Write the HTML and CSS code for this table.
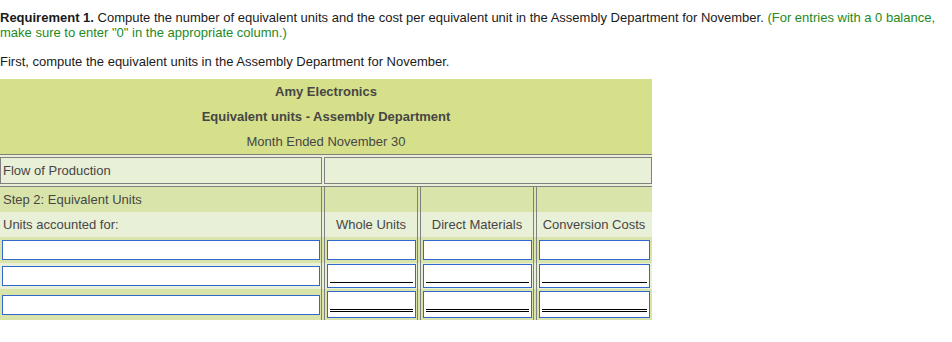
FILE: index.html
```html
<!DOCTYPE html>
<html>
<head>
<meta charset="utf-8">
<title>Equivalent units</title>
<link rel="stylesheet" href="styles.css">
</head>
<body>
<div class="intro">
  <p class="req"><b>Requirement 1.</b> Compute the number of equivalent units and the cost per equivalent unit in the Assembly Department for November. <span class="hint">(For entries with a 0 balance,</span><br><span class="hint">make sure to enter "0" in the appropriate column.)</span></p>
  <p class="first">First, compute the equivalent units in the Assembly Department for November.</p>
</div>

<div class="sheet">
  <div class="sheet-head">
    <div class="h-row bold">Amy Electronics</div>
    <div class="h-row bold">Equivalent units - Assembly Department</div>
    <div class="h-row">Month Ended November 30</div>
  </div>

  <div class="flow">
    <div class="flow-cell label">Flow of Production</div>
    <div class="flow-cell"></div>
  </div>

  <div class="lower">
    <div class="row dark">
      <div class="cell c1 label">Step 2: Equivalent Units</div>
      <div class="cell c2"></div>
      <div class="cell c3"></div>
      <div class="cell c4"></div>
    </div>
    <div class="row light">
      <div class="cell c1 label">Units accounted for:</div>
      <div class="cell c2 colhead">Whole Units</div>
      <div class="cell c3 colhead">Direct Materials</div>
      <div class="cell c4 colhead">Conversion Costs</div>
    </div>
    <div class="row dark r1">
      <div class="cell c1"><input class="text-in" type="text"></div>
      <div class="cell c2"><span class="box"><input class="num u0" type="text"></span></div>
      <div class="cell c3"><span class="box"><input class="num u0" type="text"></span></div>
      <div class="cell c4"><span class="box"><input class="num u0" type="text"></span></div>
    </div>
    <div class="row light r2">
      <div class="cell c1"><input class="text-in" type="text"></div>
      <div class="cell c2"><span class="box single"><input class="num u1" type="text"></span></div>
      <div class="cell c3"><span class="box single"><input class="num u1" type="text"></span></div>
      <div class="cell c4"><span class="box single"><input class="num u1" type="text"></span></div>
    </div>
    <div class="row dark r3">
      <div class="cell c1"><input class="text-in" type="text"></div>
      <div class="cell c2"><span class="box double"><input class="num u2" type="text"></span></div>
      <div class="cell c3"><span class="box double"><input class="num u2" type="text"></span></div>
      <div class="cell c4"><span class="box double"><input class="num u2" type="text"></span></div>
    </div>
  </div>
</div>
</body>
</html>
```

FILE: styles.css
```css
html, body {
  margin: 0;
  padding: 0;
  background: #ffffff;
}

body {
  font-family: "Liberation Sans", Arial, sans-serif;
  font-size: 13px;
  line-height: 15px;
  color: #1a1a1a;
}

.intro {
  padding-top: 10px;
}

.intro p {
  margin: 0;
}

.intro .first {
  margin: 14px 0 10px;
}

.hint {
  color: #238a23;
}

.sheet {
  width: 652px;
  background: #e8f0d8;
  color: #464646;
}

.sheet-head {
  background: #d6e08a;
  border-bottom: 1px solid #808080;
  text-align: center;
}

.h-row {
  height: 25px;
  line-height: 25px;
}

.bold {
  font-weight: bold;
}

.flow {
  display: grid;
  grid-template-columns: 322px 328px;
  column-gap: 2px;
  padding: 2px 0;
}

.flow-cell {
  border: 1px solid #808080;
  height: 25px;
  line-height: 25px;
  background: #e8f0d8;
}

.flow-cell.label {
  padding-left: 2px;
}

.lower {
  border-top: 1px solid #808080;
}

.row {
  display: grid;
  grid-template-columns: 322px 94px 114px 116px;
  column-gap: 2px;
  height: 25px;
}

.row.dark {
  background: #d9e4aa;
}

.row.light {
  background: #e8f0d8;
}

.row.r1,
.row.r2 {
  height: 26px;
}

.row.r3 {
  height: 31px;
}

.cell {
  display: flex;
  flex-direction: column;
  justify-content: center;
  min-width: 0;
}

.c1 {
  border-right: 1px solid #808080;
}

.c2,
.c3 {
  border-left: 1px solid #808080;
  border-right: 1px solid #808080;
}

.c4 {
  border-left: 1px solid #808080;
  padding-right: 1px;
}

.label {
  padding-left: 3px;
  line-height: 25px;
}

.colhead {
  text-align: center;
}

.text-in {
  display: block;
  box-sizing: border-box;
  width: calc(100% - 3px);
  height: 20px;
  margin: 0 1px 0 2px;
  padding: 0 2px;
  border: 1px solid #3366cc;
  background: #ffffff;
  font: inherit;
  outline: none;
}

.box {
  display: block;
  box-sizing: border-box;
  margin: 0 1px 0 2px;
  padding: 0 2px;
  border: 1px solid #3366cc;
  background: #ffffff;
}

.box.single {
  padding-bottom: 4px;
}

.box.double {
  padding-bottom: 5px;
}

.num {
  display: block;
  box-sizing: border-box;
  width: 100%;
  margin: 0;
  padding: 0;
  border: 0;
  background: transparent;
  font: inherit;
  outline: none;
}

.u0 {
  height: 18px;
}

.u1 {
  height: 18px;
  border-bottom: 1px solid #000000;
}

.u2 {
  height: 20px;
  border-bottom: 3px double #000000;
}
```
